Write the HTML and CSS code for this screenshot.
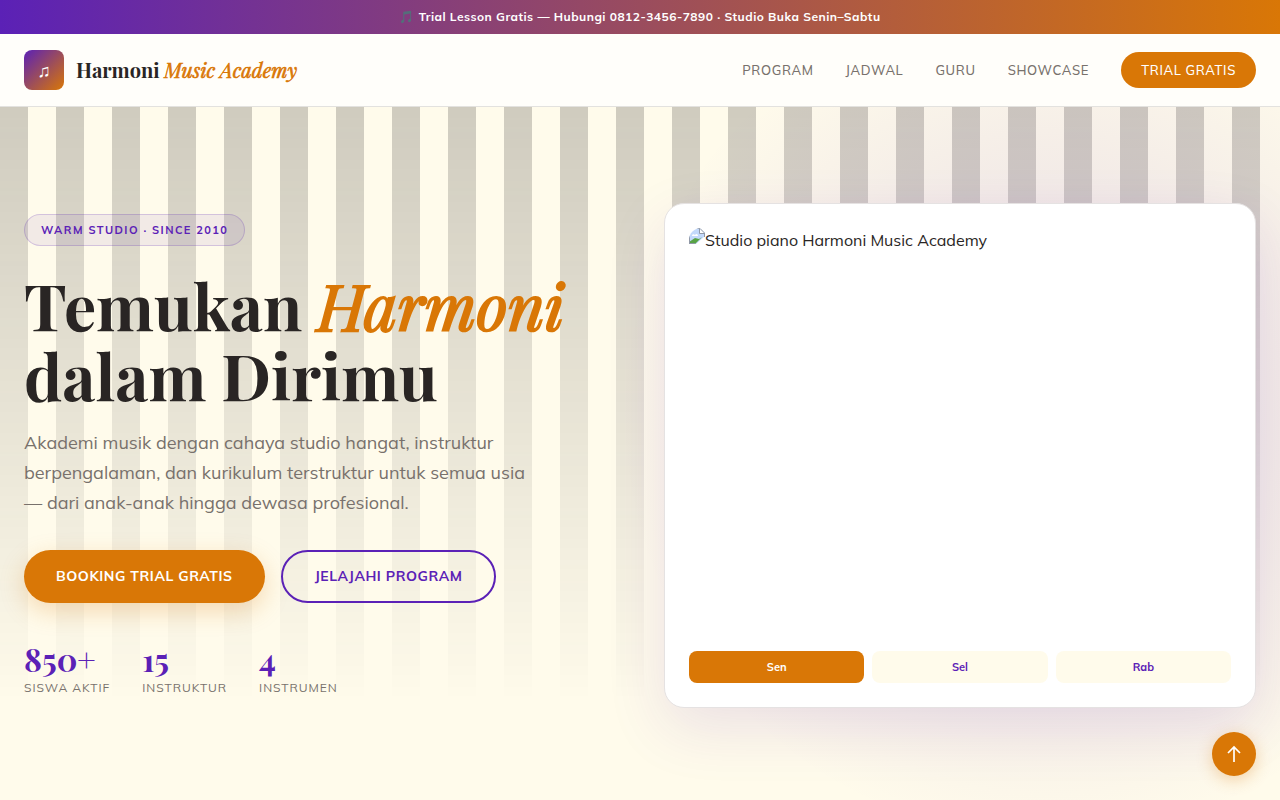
FILE: index.html
```html
<!DOCTYPE html>
<html lang="id">
<head>
    <meta charset="UTF-8">
    <meta name="viewport" content="width=device-width, initial-scale=1.0">
    <title>Harmoni Music Academy</title>
    <link rel="stylesheet" href="styles.css">
</head>
<body>

    <div class="topbar">🎵 Trial Lesson Gratis — Hubungi 0812-3456-7890 · Studio Buka Senin–Sabtu</div>

    <header class="navbar">
        <a class="brand" href="#top">
            <span class="brand-icon">♫</span>
            <span class="brand-name">Harmoni <em>Music Academy</em></span>
        </a>
        <nav class="nav-links">
            <a href="#program">Program</a>
            <a href="#jadwal">Jadwal</a>
            <a href="#guru">Guru</a>
            <a href="#showcase">Showcase</a>
            <a class="nav-cta" href="#trial">Trial Gratis</a>
        </nav>
    </header>

    <main class="hero" id="top">
        <section class="hero-text">
            <span class="badge">Warm Studio · Since 2010</span>
            <h1>Temukan <em>Harmoni</em><br>dalam Dirimu</h1>
            <p class="lead">Akademi musik dengan cahaya studio hangat, instruktur berpengalaman, dan kurikulum terstruktur untuk semua usia — dari anak-anak hingga dewasa profesional.</p>
            <div class="actions">
                <a class="btn btn-primary" href="#trial">Booking Trial Gratis</a>
                <a class="btn btn-outline" href="#program">Jelajahi Program</a>
            </div>
            <div class="stats">
                <div class="stat"><strong>850+</strong><span>Siswa Aktif</span></div>
                <div class="stat"><strong>15</strong><span>Instruktur</span></div>
                <div class="stat"><strong>4</strong><span>Instrumen</span></div>
            </div>
        </section>

        <section class="studio-card">
            <div class="studio-photo">
                <svg width="16" height="16" viewBox="0 0 16 16" aria-hidden="true">
                    <path d="M0 0h11l5 5v11H0z" fill="#c3d9fb"/>
                    <path d="M3 8c0-2 2-2 3-1 1-2 3-1 3 1z" fill="#fff"/>
                    <path d="M0 16v-2l6-4 4 1 3-2-7 7z" fill="#58a345"/>
                    <path d="M7 16l9-8v8z" fill="#fff"/>
                    <path d="M11 0v5h5z" fill="#fff"/>
                    <path d="M.5 16V.5H11L15.500 5v4M10.500 1v4.500h5M0 15.500h6" fill="none" stroke="#9098a6"/>
                </svg>
                <span>Studio piano Harmoni Music Academy</span>
            </div>
            <div class="days">
                <button class="day active" type="button">Sen</button>
                <button class="day" type="button">Sel</button>
                <button class="day" type="button">Rab</button>
            </div>
        </section>
    </main>

    <a class="to-top" href="#top" aria-label="Kembali ke atas">
        <svg width="20" height="20" viewBox="0 0 20 20" aria-hidden="true">
            <path d="M10 18V3M4 9l6-6 6 6" fill="none" stroke="currentColor" stroke-width="1.700"/>
        </svg>
    </a>

</body>
</html>
```
FILE: styles.css
```css
:root {
    --purple: #5b21b6;
    --orange: #d97706;
    --cream: #fffbeb;
    --ink: #292524;
    --muted: #78716c;
    --serif: "Playfair Display", "Liberation Serif", serif;
    --sans: "Mulish", "Open Sans", sans-serif;
}

* {
    box-sizing: border-box;
}

body {
    margin: 0;
    background: var(--cream);
    color: var(--ink);
    font-family: var(--sans);
    font-size: 16px;
}

a {
    color: inherit;
    text-decoration: none;
}

.topbar {
    padding: 8px 24px;
    background: linear-gradient(90deg, var(--purple), var(--orange));
    color: #fff;
    font-size: 12px;
    font-weight: 700;
    line-height: 18px;
    letter-spacing: 0.04em;
    text-align: center;
}

.navbar {
    display: flex;
    align-items: center;
    justify-content: space-between;
    padding: 16px 24px;
    background: #fffefa;
    border-bottom: 1px solid #e3e2df;
}

.brand {
    display: flex;
    align-items: center;
    gap: 12px;
}

.brand-icon {
    display: flex;
    align-items: center;
    justify-content: center;
    width: 40px;
    height: 40px;
    border-radius: 8px;
    background: linear-gradient(135deg, var(--purple), var(--orange));
    color: #fff;
    font-size: 18px;
}

.brand-name {
    font-family: var(--serif);
    font-size: 20px;
    font-weight: 700;
    line-height: 24px;
}

.brand-name em,
h1 em {
    color: var(--orange);
    font-weight: 400;
    -webkit-text-stroke: 0.03em var(--orange);
}

.nav-links {
    display: flex;
    align-items: center;
    gap: 32px;
    color: var(--muted);
    font-size: 13px;
    font-weight: 500;
    line-height: 20px;
    letter-spacing: 0.05em;
    text-transform: uppercase;
}

.nav-cta {
    padding: 8px 20px;
    border-radius: 18px;
    background: var(--orange);
    color: #fff;
}

.hero {
    position: relative;
    display: grid;
    grid-template-columns: 1fr 1fr;
    gap: 48px;
    align-items: center;
    padding: 96px 24px;
    overflow: hidden;
}

/* piano keys */
.hero::before {
    content: "";
    position: absolute;
    inset: 0 0 auto;
    height: 600px;
    background: repeating-linear-gradient(90deg, var(--ink) 0 28px, transparent 28px 56px);
    opacity: 0.22;
    -webkit-mask-image: linear-gradient(#000, transparent);
    mask-image: linear-gradient(#000, transparent);
}

.hero::after {
    content: "";
    position: absolute;
    inset: 0;
    background: radial-gradient(circle 430px at 82% 44%, rgba(91, 33, 182, 0.16), transparent);
}

.hero-text,
.studio-card {
    position: relative;
    z-index: 1;
}

.badge {
    display: inline-block;
    padding: 6px 16px;
    border: 1px solid rgba(91, 33, 182, 0.2);
    border-radius: 16px;
    background: rgba(91, 33, 182, 0.08);
    color: var(--purple);
    font-size: 11px;
    font-weight: 700;
    line-height: 18px;
    letter-spacing: 0.13em;
    text-transform: uppercase;
}

h1 {
    margin: 24px 0 18px;
    font-family: var(--serif);
    font-size: 64px;
    font-weight: 700;
    line-height: 70px;
}

.lead {
    max-width: 512px;
    margin: 0 0 32px;
    color: var(--muted);
    font-size: 18px;
    line-height: 30px;
}

.actions {
    display: flex;
    gap: 16px;
    margin-bottom: 38px;
}

.btn {
    padding: 16px 32px;
    border-radius: 27px;
    font-size: 14px;
    font-weight: 700;
    line-height: 21px;
    letter-spacing: 0.04em;
    text-transform: uppercase;
}

.btn-primary {
    background: var(--orange);
    color: #fff;
    box-shadow: 0 8px 24px rgba(217, 119, 6, 0.25);
}

.btn-outline {
    padding: 14px 32px;
    border: 2px solid var(--purple);
    color: var(--purple);
}

.stats {
    display: flex;
    gap: 32px;
}

.stat strong {
    display: block;
    color: var(--purple);
    font-family: var(--serif);
    font-size: 32px;
    line-height: 35px;
}

.stat span {
    color: var(--muted);
    font-size: 12px;
    line-height: 18px;
    letter-spacing: 0.08em;
    text-transform: uppercase;
}

.studio-card {
    padding: 24px;
    border: 1px solid #e5e2e2;
    border-radius: 20px;
    background: #fff;
    box-shadow: 0 20px 60px rgba(91, 33, 182, 0.12);
}

.studio-photo {
    display: flex;
    height: 400px;
    margin-bottom: 23px;
    border-radius: 12px;
    line-height: 24px;
    overflow: hidden;
}

.days {
    display: grid;
    grid-template-columns: repeat(3, 1fr);
    gap: 8px;
}

.day {
    padding: 7px;
    border: 0;
    border-radius: 8px;
    background: var(--cream);
    color: var(--purple);
    font-family: var(--sans);
    font-size: 11px;
    font-weight: 700;
    line-height: 18px;
}

.day.active {
    background: var(--orange);
    color: #fff;
}

.to-top {
    position: fixed;
    right: 24px;
    bottom: 24px;
    z-index: 2;
    display: flex;
    align-items: center;
    justify-content: center;
    width: 44px;
    height: 44px;
    border-radius: 50%;
    background: var(--orange);
    color: #fff;
    box-shadow: 0 4px 16px rgba(217, 119, 6, 0.3);
}
```
